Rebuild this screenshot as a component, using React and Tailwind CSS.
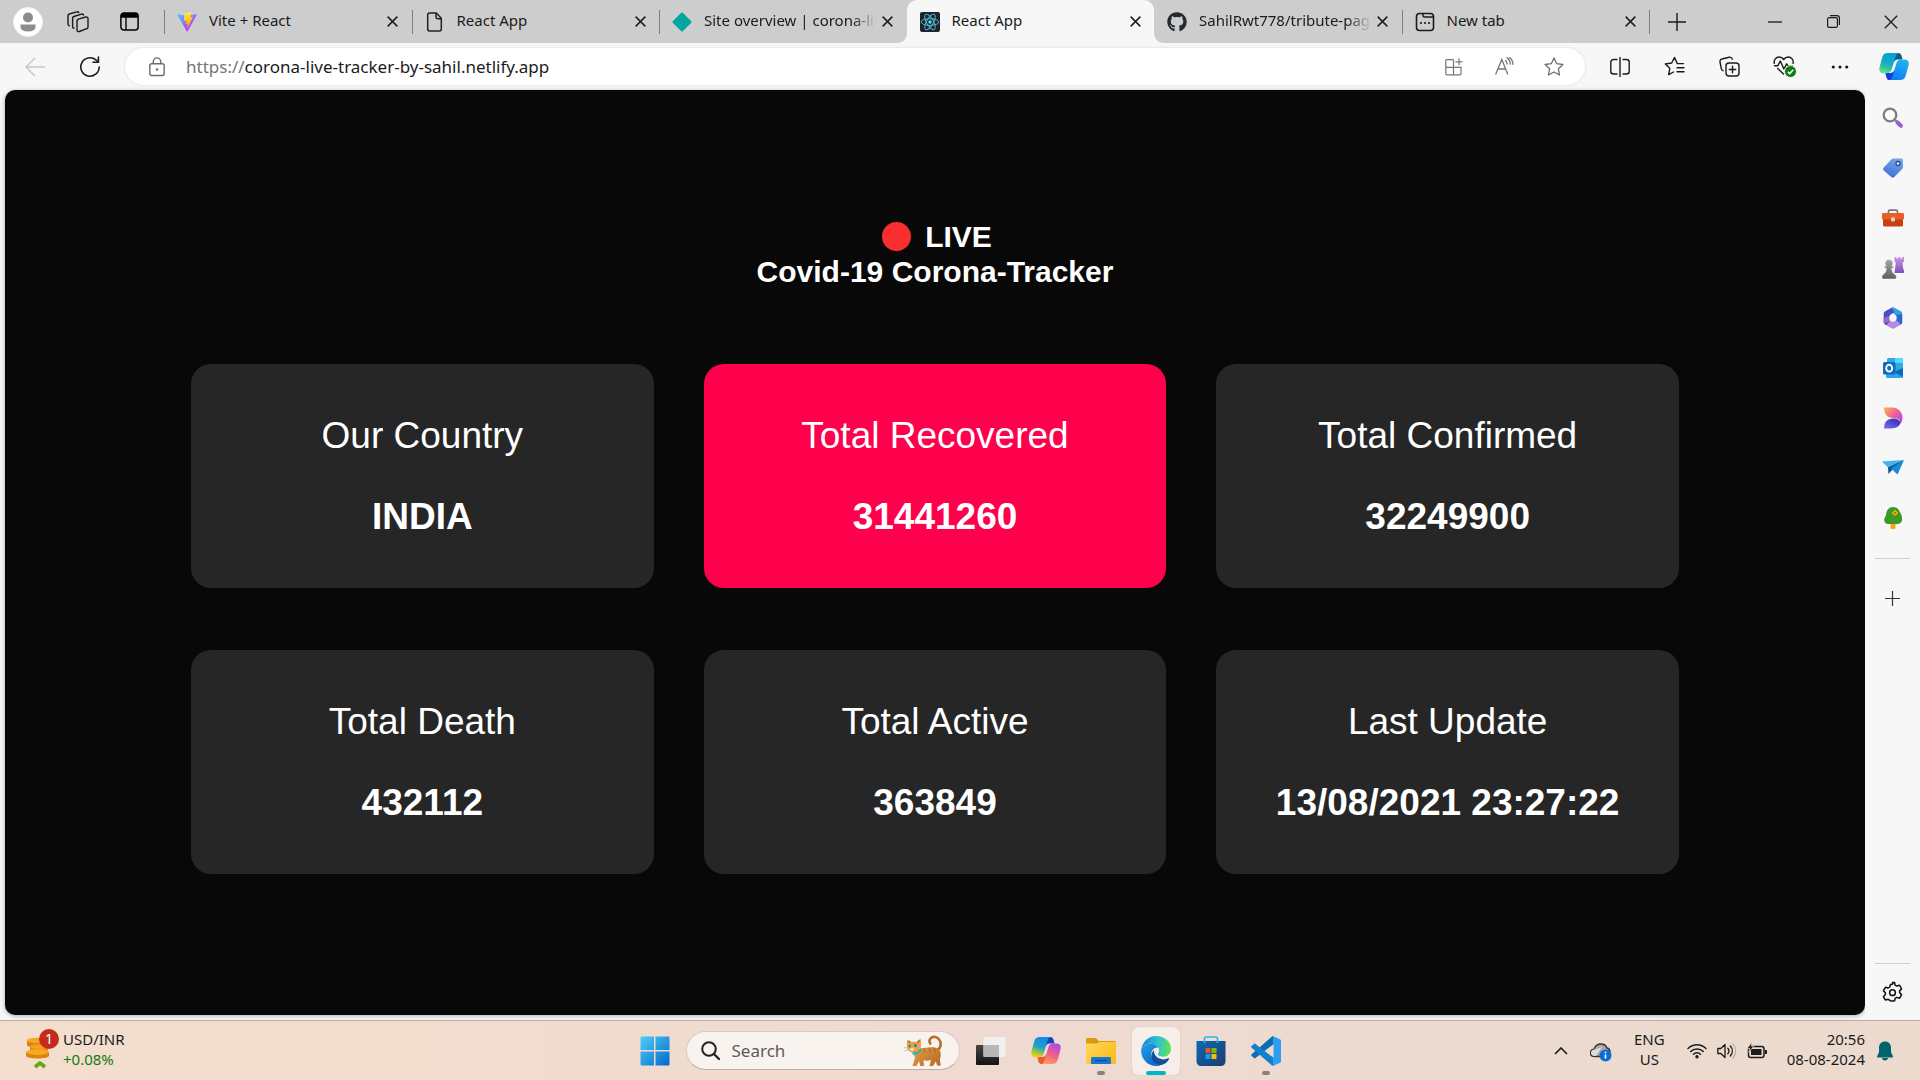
import React from "react";
import { FaGithub } from "react-icons/fa";

/* ---------- tab strip icons ---------- */

const Svg = ({ w, h = w, box, className = "", children, label }) => (
  <svg
    width={w}
    height={h}
    viewBox={box || `0 0 ${w} ${h}`}
    fill="none"
    className={"shrink-0 " + className}
    aria-hidden={label ? undefined : true}
    aria-label={label}
  >
    {children}
  </svg>
);

const Avatar = () => (
  <Svg w={30}>
    <circle cx="15" cy="15" r="14.5" fill="#fff" stroke="#f0f0f0" />
    <circle cx="15" cy="10.5" r="5" fill="#8c8c8c" />
    <path d="M7.5 17.5h15v2.3c0 3-3 4.7-7.5 4.7s-7.5-1.7-7.5-4.7z" fill="#8c8c8c" />
  </Svg>
);

const Workspaces = () => (
  <Svg w={22}>
    <g stroke="#1b1b1b" strokeWidth="1.4" strokeLinejoin="round" strokeLinecap="round">
      <path d="M11.300 8.200 18.800 6c1.200-.3 2.200.4 2.200 1.600v8.300c0 .9-.5 1.600-1.300 1.800L12.200 20.500c-1.200.4-2.200-.3-2.200-1.500V10c0-.9.500-1.600 1.300-1.800z" />
      <path d="M6.800 17.300c-.8-.2-1.200-.8-1.200-1.600V7.300c0-.9.500-1.600 1.300-1.800l7.500-2.300c1-.3 1.800.1 2.100.9" />
      <path d="M2.300 14.800c-.8-.2-1.300-.8-1.300-1.700V4.800C1 3.900 1.500 3.200 2.300 3L9.700.9c1-.3 1.700 0 2.100.7" />
    </g>
  </Svg>
);

const TabActions = () => (
  <Svg w={19}>
    <rect x=".9" y=".9" width="17.2" height="17.2" rx="3" stroke="#000" strokeWidth="1.5" />
    <path d="M.9 5.800V3.500A2.600 2.600 0 0 1 3.500.9h12a2.600 2.600 0 0 1 2.600 2.600v2.300z" fill="#000" />
    <path d="M6 5.500v12.400" stroke="#000" strokeWidth="1.4" />
  </Svg>
);

const ViteIcon = () => (
  <Svg w={20} box="0 0 32 32">
    <defs>
      <linearGradient id="va" x1="0" y1="3" x2="19" y2="28" gradientUnits="userSpaceOnUse">
        <stop stopColor="#41d1ff" />
        <stop offset="1" stopColor="#bd34fe" />
      </linearGradient>
      <linearGradient id="vb" x1="15" y1="2" x2="18" y2="24" gradientUnits="userSpaceOnUse">
        <stop stopColor="#ffea83" />
        <stop offset=".1" stopColor="#ffdd35" />
        <stop offset="1" stopColor="#ffa800" />
      </linearGradient>
    </defs>
    <path d="M31.500 4.700 16.900 30.900c-.3.500-1.100.5-1.400 0L.6 4.700c-.3-.6.200-1.300.9-1.200l14.600 2.600h.3l14.300-2.600c.7-.1 1.200.6.8 1.200z" fill="url(#va)" />
    <path d="m22.800.2-10.800 2.100a.4.400 0 0 0-.3.400L11 14c0 .3.200.5.500.4l3-.7c.3 0 .5.200.5.500l-.9 4.400c-.1.300.2.600.5.500l1.900-.6c.3-.1.500.2.500.5l-1.400 6.900c-.1.400.5.700.7.300l.2-.2 8.800-17.600c.2-.3-.1-.6-.4-.6l-3.100.6c-.3.100-.5-.2-.5-.5l2-7c.1-.3-.2-.6-.5-.6z" fill="url(#vb)" />
  </Svg>
);

const FileIcon = () => (
  <Svg w={20}>
    <path d="M4.500 1h6.800l5 5.300v10.800c0 1.100-.7 1.900-1.800 1.900h-10c-1.100 0-1.800-.8-1.800-1.900V2.900C2.700 1.800 3.400 1 4.500 1z" stroke="#222" strokeWidth="1.5" strokeLinejoin="round" />
    <path d="M11 1.300v4c0 .9.500 1.400 1.400 1.400h3.800" stroke="#222" strokeWidth="1.5" />
  </Svg>
);

const NetlifyIcon = () => (
  <Svg w={20}>
    <path d="M9 .9a1.400 1.400 0 0 1 2 0l8 8.100a1.400 1.400 0 0 1 0 2l-8 8.100a1.400 1.400 0 0 1-2 0L1 11a1.400 1.400 0 0 1 0-2z" fill="#00a6a0" />
  </Svg>
);

const ReactIcon = () => (
  <Svg w={20}>
    <rect width="20" height="20" rx="2" fill="#20232a" />
    <g stroke="#4fc3e0" strokeWidth=".9">
      <ellipse cx="10" cy="10" rx="8.8" ry="3.4" />
      <ellipse cx="10" cy="10" rx="8.8" ry="3.4" transform="rotate(60 10 10)" />
      <ellipse cx="10" cy="10" rx="8.8" ry="3.4" transform="rotate(120 10 10)" />
    </g>
    <circle cx="10" cy="10" r="1.7" fill="#61dafb" />
  </Svg>
);

const NewTabIcon = () => (
  <Svg w={20}>
    <rect x="1.5" y="1.5" width="17" height="17" rx="3" stroke="#1b1b1b" strokeWidth="1.6" />
    <path d="M8 1.500v2.200c0 .9.500 1.400 1.400 1.400h9" stroke="#1b1b1b" strokeWidth="1.5" />
    <circle cx="6" cy="11" r="1.1" fill="#1b1b1b" />
    <circle cx="10" cy="11" r="1.1" fill="#1b1b1b" />
    <circle cx="14" cy="11" r="1.1" fill="#1b1b1b" />
  </Svg>
);

const Cross = ({ size = 11, width = 1.6 }) => (
  <Svg w={size} box="0 0 12 12">
    <path d="m.7.7 10.600 10.600M11.300.7.7 11.300" stroke="#1b1b1b" strokeWidth={width} />
  </Svg>
);

const tabs = [
  { title: "Vite + React", icon: <ViteIcon /> },
  { title: "React App", icon: <FileIcon /> },
  { title: "Site overview | corona-liv", icon: <NetlifyIcon />, long: true },
  { title: "React App", icon: <ReactIcon />, active: true },
  { title: "SahilRwt778/tribute-page", icon: <FaGithub size={20} color="#24292f" className="shrink-0" />, long: true },
  { title: "New tab", icon: <NewTabIcon /> },
];

const Corner = ({ side }) => (
  <svg
    width="10"
    height="10"
    viewBox="0 0 10 10"
    aria-hidden="true"
    className={side === "left" ? "absolute bottom-0 -left-2.5" : "absolute bottom-0 -right-2.5 -scale-x-100"}
  >
    <path d="M10 0v10H0C6 10 10 6 10 0z" fill="#f7f7f7" />
  </svg>
);

function Tab({ tab, divider }) {
  return (
    <div
      className={
        "relative flex h-full min-w-0 flex-1 items-center pr-[7px] pl-[13px] " +
        (tab.active ? "rounded-t-[10px] bg-[#f7f7f7]" : "")
      }
    >
      {divider && <span className="absolute top-2.5 left-0 h-6 w-px bg-[#7f7f7f]" />}
      {tab.active && <Corner side="left" />}
      {tab.active && <Corner side="right" />}
      <button
        role="tab"
        aria-selected={!!tab.active}
        className="flex min-w-0 flex-1 items-center gap-3 text-left text-[15px] leading-5 text-[#1b1b1b]"
      >
        {tab.icon}
        <span
          className={
            "min-w-0 flex-1 overflow-hidden pb-[3px] whitespace-nowrap " +
            (tab.long ? "[mask-image:linear-gradient(to_right,black_calc(100%-24px),transparent)]" : "")
          }
        >
          {tab.title}
        </span>
      </button>
      <button aria-label={`Close ${tab.title}`} className="flex size-6 shrink-0 items-center justify-center">
        <Cross />
      </button>
    </div>
  );
}

function TabStrip() {
  return (
    <header className="flex h-[43px] items-center bg-[#cdcdcd]">
      <div className="flex w-[164px] shrink-0 items-center">
        <button aria-label="Profile" className="ml-[13px]">
          <Avatar />
        </button>
        <button aria-label="Workspaces" className="ml-6">
          <Workspaces />
        </button>
        <button aria-label="Tab actions menu" className="ml-[31px]">
          <TabActions />
        </button>
      </div>
      <div role="tablist" className="flex h-full min-w-0 flex-1">
        {tabs.map((t, i) => (
          <Tab key={i} tab={t} divider={i !== 3 && i !== 4} />
        ))}
      </div>
      <div className="flex h-full w-[271px] shrink-0 items-center justify-between">
        <span className="h-6 w-px bg-[#7f7f7f]" />
        <button aria-label="New tab" className="mr-auto ml-[18px]">
          <Svg w={18}>
            <path d="M9 0v18M0 9h18" stroke="#1b1b1b" strokeWidth="1.4" />
          </Svg>
        </button>
        <button aria-label="Minimize" className="flex h-full w-[58px] items-center justify-center">
          <Svg w={14}>
            <path d="M0 7h14" stroke="#1b1b1b" strokeWidth="1.3" />
          </Svg>
        </button>
        <button aria-label="Restore" className="flex h-full w-[58px] items-center justify-center">
          <Svg w={13}>
            <rect x=".6" y="2.6" width="9.8" height="9.8" rx="1.5" stroke="#1b1b1b" strokeWidth="1.2" />
            <path d="M3 .6h7c1.500 0 2.400.9 2.400 2.400v7" stroke="#1b1b1b" strokeWidth="1.2" />
          </Svg>
        </button>
        <button aria-label="Close window" className="flex h-full w-[58px] items-center justify-center">
          <Cross size={14} width={1.1} />
        </button>
      </div>
    </header>
  );
}

/* ---------- toolbar ---------- */

const CopilotMark = ({ size, dark }) => {
  const id = dark ? "ca" : "cb";
  return (
    <Svg w={size} h={Math.round(size * 0.9)} box="0 0 32 29">
      <defs>
        <linearGradient id={id + 1} x1="10" y1="0" x2="4" y2="20" gradientUnits="userSpaceOnUse">
          <stop stopColor={dark ? "#0a9fd8" : "#128ce8"} />
          <stop offset=".5" stopColor={dark ? "#12acc8" : "#1ea0c8"} />
          <stop offset=".75" stopColor={dark ? "#2fc0a0" : "#7cc35a"} />
          <stop offset="1" stopColor={dark ? "#5fdf90" : "#f6c916"} />
        </linearGradient>
        <linearGradient id={id + 2} x1="27" y1="7" x2="19" y2="29" gradientUnits="userSpaceOnUse">
          <stop stopColor={dark ? "#1fb4ee" : "#a84be8"} />
          <stop offset=".5" stopColor={dark ? "#189af8" : "#ee5a93"} />
          <stop offset="1" stopColor={dark ? "#147bf0" : "#fc9c58"} />
        </linearGradient>
      </defs>
      <path d="M17 0h3.500c2 0 3 1 3.500 2.800L25.200 7H20c-2.500 0-3.800 1.500-4.500 4z" fill={dark ? "#0a5a86" : "#1a44c8"} />
      <path d="M15 29h-3.600c-2 0-3-1-3.500-2.800L6.600 21.500H12c2.500 0 3.800-1.500 4.500-4z" fill={dark ? "#1040d8" : "#f0592e"} />
      <path d="M9.500 0H21c-2 .3-2.800 2-3.400 4l-4 13.500C12.700 20.500 11 21.700 8 21.700H4.500C1 21.700-.5 19 .4 15.500l3-11C4.300 1.400 6.200 0 9.500 0z" fill={`url(#${id}1)`} />
      <path d="M22.500 29H11c2-.3 2.800-2 3.400-4l4-13.500C19.300 8.200 21 7 24 7h3.500c3.500 0 5 2.700 4.100 6.200l-3 11.300c-.9 3.100-2.800 4.500-6.100 4.500z" fill={`url(#${id}2)`} />
    </Svg>
  );
};

const inBarIcons = [
  {
    label: "Apps",
    icon: (
      <Svg w={18}>
        <g stroke="#767676" strokeWidth="1.2">
          <path d="M8.500 1.600H1.900c-.7 0-1.100.4-1.100 1.100v13c0 .7.400 1.100 1.100 1.100h13c.7 0 1.100-.4 1.100-1.100V9.300H.8M8.500 1.600v15.200" />
          <path d="M14 .3v7M10.500 3.800h7" />
        </g>
      </Svg>
    ),
  },
  {
    label: "Read aloud",
    icon: (
      <Svg w={19}>
        <g stroke="#767676" strokeWidth="1.3" strokeLinecap="round">
          <path d="m.8 17 6-14.500L12.600 17M2.900 12h7.700M10.500 3.500c1 .8 1.600 2 1.600 3.500M12 .9c2.200 1.500 3.300 3.500 3.300 6.200M14.500.3c2.200 1.800 3.400 4.200 3.400 7" />
        </g>
      </Svg>
    ),
  },
  {
    label: "Add to favorites",
    icon: (
      <Svg w={20}>
        <path d="m10 1 2.700 5.700 6.200.8-4.500 4.300 1.100 6.200L10 15l-5.500 3 1.100-6.200L1.100 7.500l6.200-.8z" stroke="#6e6e6e" strokeWidth="1.3" strokeLinejoin="round" />
      </Svg>
    ),
  },
];

const barIcons = [
  {
    label: "Split screen",
    icon: (
      <Svg w={20}>
        <path d="M10 0v20M7.500 2.500h-4C2 2.500.8 3.500.8 5v9.500c0 1.500 1.200 2.500 2.700 2.500h4M12.500 2.500h4c1.500 0 2.700 1 2.700 2.500v9.500c0 1.500-1.200 2.500-2.700 2.500h-4" stroke="#1b1b1b" strokeWidth="1.4" />
      </Svg>
    ),
  },
  {
    label: "Favorites",
    icon: (
      <Svg w={21}>
        <g stroke="#1b1b1b" strokeWidth="1.4" strokeLinejoin="round" strokeLinecap="round">
          <path d="M19.500 7.600h-6.200L10.500 1.500 7.700 7 1.300 8l4.500 4.300-1.100 6.300 4.800-2.600" />
          <path d="M13 11.700h7M13 15.700h7" />
        </g>
      </Svg>
    ),
  },
  {
    label: "Collections",
    icon: (
      <Svg w={21}>
        <g stroke="#1b1b1b" strokeWidth="1.4" strokeLinecap="round">
          <rect x="7" y="7" width="13" height="13" rx="3" />
          <path d="M13.500 10.300v6.400M10.300 13.500h6.400M4 14.700c-.9-.3-1.500-1-1.700-2L1 6c-.3-1.500.5-2.700 2-3l7.200-1.800c1.500-.3 2.700.4 3 2" />
        </g>
      </Svg>
    ),
  },
  {
    label: "Browser essentials",
    icon: (
      <Svg w={24}>
        <g stroke="#1b1b1b" strokeWidth="1.4" strokeLinejoin="round" strokeLinecap="round">
          <path d="M1.300 8.300C.6 4.800 3 2 6.200 2c1.900 0 3.400 1 4.500 2.500C11.800 3 13.300 2 15.200 2c3.200 0 5.600 2.800 4.900 6.300" />
          <path d="M1.500 10.800h3.200L7.300 6l3.600 8 2.800-5.200 1.300 2h4.500" />
          <path d="m4.700 13.500 5.800 5.500" />
        </g>
        <circle cx="17.5" cy="16.5" r="6" fill="#107c10" stroke="#f7f7f7" strokeWidth="1" />
        <path d="m14.800 16.700 1.900 1.900 3.600-3.800" stroke="#fff" strokeWidth="1.5" />
      </Svg>
    ),
  },
  {
    label: "Settings and more",
    icon: (
      <Svg w={18}>
        <circle cx="2.3" cy="9" r="1.6" fill="#1b1b1b" />
        <circle cx="9" cy="9" r="1.6" fill="#1b1b1b" />
        <circle cx="15.7" cy="9" r="1.6" fill="#1b1b1b" />
      </Svg>
    ),
  },
];

function Toolbar() {
  return (
    <div className="flex h-[47px] items-center bg-[#f7f7f7]">
      <button aria-label="Back" disabled className="ml-[25px]">
        <Svg w={20}>
          <path d="M20 10H1M10 1l-9 9 9 9" stroke="#c6c6c6" strokeWidth="1.4" />
        </Svg>
      </button>
      <button aria-label="Refresh" className="ml-[34px]">
        <Svg w={22}>
          <path d="M20.200 11a9.200 9.200 0 1 1-3.300-7.100L19.200 6" stroke="#1b1b1b" strokeWidth="1.6" strokeLinecap="round" />
          <path d="M19.400 1v5.300H14" stroke="#1b1b1b" strokeWidth="1.6" strokeLinecap="round" />
        </Svg>
      </button>
      <div className="mr-[7px] ml-6 flex h-[37px] min-w-0 flex-1 items-center rounded-full bg-white pr-1.5 pl-6 shadow-[0_0_3px_rgba(0,0,0,0.12)]">
        <button aria-label="View site information">
          <Svg w={16} h={20}>
            <rect x=".8" y="6.7" width="14.4" height="11.8" rx="1.8" stroke="#6e6e6e" strokeWidth="1.4" />
            <path d="M4.300 6.500V4.600a3.700 3.700 0 0 1 7.400 0v1.900" stroke="#6e6e6e" strokeWidth="1.4" />
            <circle cx="8" cy="12.5" r="1.2" fill="#6e6e6e" />
          </Svg>
        </button>
        <label htmlFor="address" className="ml-[21px] text-[17px] leading-6 text-[#767676]">
          https://
        </label>
        <input
          id="address"
          aria-label="Address"
          defaultValue="corona-live-tracker-by-sahil.netlify.app"
          className="min-w-0 flex-1 bg-transparent text-[17px] leading-6 text-[#1b1b1b] outline-none"
        />
        {inBarIcons.map((b) => (
          <button key={b.label} aria-label={b.label} className="flex w-[50px] shrink-0 items-center justify-center">
            {b.icon}
          </button>
        ))}
      </div>
      {barIcons.map((b) => (
        <button key={b.label} aria-label={b.label} className="flex w-[55px] shrink-0 items-center justify-center">
          {b.icon}
        </button>
      ))}
      <button aria-label="Copilot" className="flex w-[53px] shrink-0 items-center justify-center">
        <CopilotMark size={30} dark />
      </button>
    </div>
  );
}

/* ---------- sidebar ---------- */

const sideIcons = [
  {
    label: "Search",
    icon: (
      <Svg w={22}>
        <circle cx="8" cy="8" r="6.3" stroke="#7d7d7d" strokeWidth="2.3" fill="#fafafa" />
        <path d="m12.800 12.800 2.500 2.500" stroke="#8c7aa0" strokeWidth="2" />
        <path d="m15.500 15.500 3.400 3.200" stroke="#9264cf" strokeWidth="4.2" strokeLinecap="round" />
      </Svg>
    ),
  },
  {
    label: "Shopping",
    icon: (
      <Svg w={22}>
        <defs>
          <linearGradient id="tag" x1="14" y1="1" x2="8" y2="21" gradientUnits="userSpaceOnUse">
            <stop stopColor="#6ea8f0" />
            <stop offset="1" stopColor="#3f6fd0" />
          </linearGradient>
        </defs>
        <path d="M11.500 1.500h7.800c1 0 1.700.7 1.700 1.700V10c0 .8-.3 1.500-.8 2l-8 8c-.9.900-2 .9-2.900 0l-7.500-6.500c-1-.9-1-2 0-3l7.500-8c.6-.6 1.300-1 2.200-1z" fill="url(#tag)" />
        <circle cx="16" cy="6.5" r="2" fill="#fff" stroke="#27457f" strokeWidth="1.3" />
      </Svg>
    ),
  },
  {
    label: "Tools",
    icon: (
      <Svg w={22}>
        <path d="M6.500 7V4.600c0-.9.600-1.400 1.500-1.400h6c.9 0 1.500.5 1.500 1.400V7" stroke="#777" strokeWidth="1.7" />
        <rect x="1" y="11" width="20" height="8.5" rx="1.5" fill="#c9400f" />
        <rect x="0" y="6" width="22" height="6.5" rx="1.3" fill="#ea5d25" />
        <rect x="9" y="10.2" width="4" height="4.2" rx="1.5" fill="#d6d6d6" />
      </Svg>
    ),
  },
  {
    label: "Games",
    icon: (
      <Svg w={22}>
        <defs>
          <linearGradient id="rook" x1="17" y1="0" x2="17" y2="17" gradientUnits="userSpaceOnUse">
            <stop stopColor="#c697ec" />
            <stop offset="1" stopColor="#7c4bb8" />
          </linearGradient>
          <linearGradient id="pawn" x1="7" y1="3" x2="7" y2="22" gradientUnits="userSpaceOnUse">
            <stop stopColor="#a2a2a2" />
            <stop offset="1" stopColor="#5f5f5f" />
          </linearGradient>
        </defs>
        <path d="M12.500 0h2v1.500h1.700V0h2.100v1.500H20V0h2v4.500l-1.500 1.300.7 6.200 1 1.200V16H12.500l1.300-10.200-1.300-1.300z" fill="url(#rook)" />
        <path d="M7 2.500a3.900 3.900 0 0 1 2.800 6.700h.9c.7 0 1 .4 1 1s-.3 1-1 1h-1c.2 2.600.8 4.300 2.300 5.500l1.700 1.300c.4.300.6.700.6 1.200v1.300c0 .8-.6 1.500-1.500 1.500H1.200C.5 22 0 21.300 0 20.500v-1.300c0-.5.200-.9.600-1.200l1.500-1.300c1.400-1.200 2-2.900 2.200-5.500h-1c-.7 0-1-.4-1-1s.3-1 1-1h.9A3.900 3.900 0 0 1 7 2.500z" fill="url(#pawn)" stroke="#f7f7f7" strokeWidth=".5" />
      </Svg>
    ),
  },
  {
    label: "Microsoft 365",
    icon: (
      <Svg w={22}>
        <path d="M9.500.7c1-.5 2-.5 3 0l6.300 3.600c1 .6 1.500 1.500 1.500 2.600L14 11 11.500 6 5 8z" fill="#35a0e8" />
        <path d="M20.300 6.900V15c0 1.100-.5 2-1.500 2.600l-1.300.8L11 15l3-4-.5-3z" fill="#2d66cf" />
        <path d="M18.800 17.600 12.500 21.300c-1 .5-2 .5-3 0L3.200 17.600c-.6-.4-1-.9-1.200-1.400L8 12l3 3 4-1.500z" fill="#b58be6" />
        <path d="M9.500.7 3.200 4.300C2.200 4.900 1.700 5.800 1.700 6.900V15c0 1 .5 2 1.500 2.600.5.300 1 .4 1.500.3L8 14V8l4.500-3z" fill="#4a4fc0" />
        <path d="M2 16.300 1.700 15V11L8 9v5.500z" fill="#a263cf" />
        <circle cx="11" cy="11" r="3.7" fill="#f7f7f7" />
      </Svg>
    ),
  },
  {
    label: "Outlook",
    icon: (
      <Svg w={22}>
        <rect x="5" y="1" width="16" height="20" rx="1.5" fill="#32a9e7" />
        <path d="M13 1h6.500c.9 0 1.500.6 1.500 1.500V6h-8z" fill="#50d9ff" />
        <path d="m4 11 17 0v8.500c0 .9-.6 1.500-1.500 1.500h-14c-.9 0-1.500-.6-1.500-1.500z" fill="#28a8ea" />
        <path d="M21 11v9l-9-5z" fill="#0f67b8" />
        <rect x="1" y="5" width="12.5" height="12.5" rx="1.5" fill="#0f6cbd" />
        <ellipse cx="7.2" cy="11.2" rx="3" ry="3.4" stroke="#fff" strokeWidth="1.9" />
      </Svg>
    ),
  },
  {
    label: "Designer",
    icon: (
      <Svg w={22}>
        <defs>
          <linearGradient id="d1" x1="3" y1="1" x2="20" y2="15" gradientUnits="userSpaceOnUse">
            <stop stopColor="#ffb04a" />
            <stop offset=".5" stopColor="#f0609a" />
            <stop offset="1" stopColor="#b244f0" />
          </linearGradient>
          <linearGradient id="d2" x1="10" y1="12" x2="4" y2="22" gradientUnits="userSpaceOnUse">
            <stop stopColor="#3d3bb8" />
            <stop offset="1" stopColor="#7d6cf5" />
          </linearGradient>
        </defs>
        <path d="M2 .5h8c6 0 10.500 4.500 10.500 10.300 0 5-3.500 8.500-7.500 10L18 14c-1-2.500-4-3-7-3C5.500 11 2 7 2 1z" fill="url(#d1)" />
        <path d="M2 21.500C2 15 5.500 11.500 11.500 11.500c4 0 6.500 1.600 6.500 4.300 0 3.500-4.500 5.700-9 5.700z" fill="url(#d2)" />
      </Svg>
    ),
  },
  {
    label: "Drop",
    icon: (
      <Svg w={22}>
        <path d="M0 4.500 22 3 6.500 11z" fill="#3fb4f2" />
        <path d="M22 3 6 10.500l.5 6.500 3.500-4z" fill="#0f548c" />
        <path d="M22 3 9 11.500l6.500 6z" fill="#1e88d8" />
      </Svg>
    ),
  },
  {
    label: "Tree",
    icon: (
      <Svg w={22}>
        <rect x="8.5" y="15" width="5" height="7" rx="1" fill="#f2a81d" />
        <path d="M11 0c3.500 0 5.800 2 6.800 5 1.500 2 2.300 4.500 2.300 7 0 3-2 5-5 5H6.500C4 17 2.300 15.500 2.300 13c0-2 .8-3.500 1.700-4.500C4 4 6.500 0 11 0z" fill="#3c9a24" />
        <path d="m13 2.800 3.200 3.100L13 9 9.800 5.900z" fill="#f5b80f" />
        <circle cx="13" cy="5.9" r="1.2" fill="#e05a10" />
      </Svg>
    ),
  },
];

function Sidebar() {
  return (
    <aside aria-label="Sidebar" className="flex w-[55px] shrink-0 flex-col items-center bg-[#f7f7f7] pt-[3px]">
      {sideIcons.map((s) => (
        <button key={s.label} aria-label={s.label} className="flex h-[50px] w-full items-center justify-center">
          {s.icon}
        </button>
      ))}
      <hr className="mt-[15px] mb-3.5 w-[35px] border-[#cfcfcf]" />
      <button aria-label="Customize" className="flex h-[50px] w-full items-center justify-center">
        <Svg w={15}>
          <path d="M7.500 0v15M0 7.500h15" stroke="#333" strokeWidth="1.2" />
        </Svg>
      </button>
      <hr className="mt-auto w-[35px] border-[#cfcfcf]" />
      <button aria-label="Settings" className="flex h-14 w-full items-center justify-center">
        <Svg w={23} box="0 0 24 24">
          <path d="M12 1.500c.8 0 1.500.1 2.200.2l.6 2.700c.6.200 1.200.5 1.700.9l2.700-.8c1 1.100 1.800 2.400 2.200 3.800l-2 2c.1.600.1 1.200 0 1.800l2 2c-.4 1.400-1.200 2.700-2.200 3.800l-2.700-.8c-.5.400-1.100.7-1.700.9l-.6 2.700c-1.400.3-3 .3-4.400 0L9.200 20c-.6-.2-1.200-.5-1.700-.9l-2.700.8c-1-1.100-1.800-2.400-2.200-3.800l2-2c-.1-.6-.1-1.200 0-1.800l-2-2c.4-1.400 1.200-2.700 2.200-3.800l2.700.8c.5-.4 1.100-.7 1.700-.9l.6-2.700c.7-.1 1.400-.2 2.200-.2z" stroke="#111" strokeWidth="1.6" strokeLinejoin="round" />
          <circle cx="12" cy="12.2" r="3" stroke="#111" strokeWidth="1.6" />
        </Svg>
      </button>
    </aside>
  );
}

/* ---------- tracker page ---------- */

const cards = [
  { title: "Our Country", value: "INDIA" },
  { title: "Total Recovered", value: "31441260", highlight: true },
  { title: "Total Confirmed", value: "32249900" },
  { title: "Total Death", value: "432112" },
  { title: "Total Active", value: "363849" },
  { title: "Last Update", value: "13/08/2021 23:27:22" },
];

function Tracker() {
  return (
    <main className="mb-[5px] ml-[5px] min-w-0 flex-1 rounded-[10px] bg-[#080808] pt-[129px] font-['Liberation_Sans',Arial,sans-serif] text-white shadow-[0_1px_4px_rgba(0,0,0,0.3)]">
      <h1 className="flex items-center justify-center gap-3.5 pl-1 text-[30px] leading-[35px] font-bold">
        <span className="size-[29px] rounded-full bg-[#f92f2f]" />
        LIVE
      </h1>
      <h2 className="text-center text-[30px] leading-[35px] font-bold">Covid-19 Corona-Tracker</h2>
      <ul className="mx-auto mt-[75px] grid w-4/5 grid-cols-3 gap-x-[50px] gap-y-[62px]">
        {cards.map((c) => (
          <li
            key={c.title}
            className={
              "flex h-56 flex-col items-center justify-center gap-[38px] rounded-[20px] text-center " +
              (c.highlight ? "bg-[#ff004d]" : "bg-[#262626]")
            }
          >
            <p className="text-[37px] leading-[43px]">{c.title}</p>
            <p className="text-[37px] leading-[43px] font-bold">{c.value}</p>
          </li>
        ))}
      </ul>
    </main>
  );
}

/* ---------- taskbar ---------- */

const Cat = () => (
  <Svg w={39} h={32}>
    <defs>
      <linearGradient id="cat" x1="8" y1="4" x2="34" y2="31" gradientUnits="userSpaceOnUse">
        <stop stopColor="#eda94f" />
        <stop offset="1" stopColor="#b96c22" />
      </linearGradient>
    </defs>
    <path d="M33 16c3.500-3 4.500-7 2.800-10.500C34 2 29 .500 26.500 3.500 25 5.500 25.300 7.300 26.300 8.500" stroke="#b8702a" strokeWidth="2.6" strokeLinecap="round" />
    <path d="M13 13c6 1 12-1.500 18-.5 4.500.8 6 4 5.800 7.500 0 2.500-1.300 4-.8 6l.8 4.500h-3.600l-1.400-4-2.800 4.500h-3.500l1.500-6c-3 1-5 1-7.500.3l.5 5.700h-3.700l-1.300-5-2.500 5H8.500l2.500-8-1.500-6z" fill="url(#cat)" />
    <path d="M3.500 4.500 7.500 7c1.700-.5 3.300-.5 5 0l4-3.500c.8 3.500.7 6.500.2 9-.7 3-3.700 5-6.700 5-3.500 0-6.500-2-7-5C2.600 10 2.800 7 3.500 4.500z" fill="#e8a24a" />
    <path d="m4.600 6.300 1.500 1.200M15.500 5.500l-1.800 1.900" stroke="#9b5418" strokeWidth="1.2" />
    <path d="M20 13.500l.8 3.500M25 13l1 4M30 13l1.500 4" stroke="#a65f1c" strokeWidth=".9" strokeLinecap="round" />
    <ellipse cx="5.8" cy="11" rx="1.2" ry="1.6" fill="#2a8fa8" />
    <ellipse cx="11.5" cy="10.5" rx="1.5" ry="1.7" fill="#2a8fa8" />
    <path d="M5.500 13.500h5l-2.300 2.800z" fill="#fff0da" />
    <path d="M0 12.500l4 .8M.5 16l4-1.300" stroke="#b9a58e" strokeWidth=".6" />
    <path d="M8.500 18c4 .8 7-1 8.500-4" stroke="#27b3ae" strokeWidth="1.8" />
    <circle cx="10" cy="19" r="1.3" fill="#3bc2c8" />
  </Svg>
);

const EdgeIcon = () => (
  <Svg w={30} box="0 0 32 32">
    <defs>
      <linearGradient id="e1" x1="4" y1="8" x2="32" y2="12" gradientUnits="userSpaceOnUse">
        <stop stopColor="#1b93d8" />
        <stop offset=".5" stopColor="#2ec3cf" />
        <stop offset="1" stopColor="#66e34b" />
      </linearGradient>
      <linearGradient id="e2" x1="2" y1="12" x2="18" y2="32" gradientUnits="userSpaceOnUse">
        <stop stopColor="#1a9ae3" />
        <stop offset="1" stopColor="#0f62c4" />
      </linearGradient>
    </defs>
    <path d="M.5 14C1.500 6 8 0 16 0c9 0 16 6 16 13.500 0 5-3.500 8.500-8.500 8.500-3.500 0-6-1.300-5.500-3 .3-.8 1.300-1.500 1.300-3.500C19.300 11 15 8 10.500 8 5.500 8 2 10.500.5 14z" fill="url(#e1)" />
    <path d="M.2 14.500C1.500 10.500 5.500 8 10.500 8c3.500 0 6.500 1.800 7.800 4.200C13 12 10.500 16.500 11 21c.6 6 5 10 10 10.200C19.500 31.700 17.800 32 16 32 7 32-.5 24 .2 14.500z" fill="url(#e2)" />
    <path d="M14 15c-1.500 1.500-3.300 4-3 7.500C11.500 28 16.500 32 22 31c3.800-1 6.500-3.700 7.900-6.500.3-.6-.3-1-.8-.7-3.600 1.800-8.600 1.400-11.600-.8C14.500 20.800 13.500 18 14 15z" fill="#10509f" />
  </Svg>
);

const taskApps = [
  {
    label: "Task view",
    icon: (
      <Svg w={30}>
        <defs>
          <linearGradient id="tv" x1="0" y1="8" x2="0" y2="28" gradientUnits="userSpaceOnUse">
            <stop stopColor="#484848" />
            <stop offset="1" stopColor="#151515" />
          </linearGradient>
        </defs>
        <rect y="9" width="23" height="20" rx="1" fill="url(#tv)" />
        <rect x="7.5" y="1" width="22" height="20" rx="1" fill="#f1f1f1" fillOpacity=".94" />
        <path d="M7.500 9H23v12H8.500a1 1 0 0 1-1-1z" fill="#b7b7b7" />
      </Svg>
    ),
  },
  { label: "Copilot", icon: <CopilotMark size={30} /> },
  {
    label: "File Explorer",
    running: true,
    icon: (
      <Svg w={30}>
        <defs>
          <linearGradient id="fo" x1="0" y1="4" x2="30" y2="28" gradientUnits="userSpaceOnUse">
            <stop stopColor="#ffd95e" />
            <stop offset="1" stopColor="#fdb913" />
          </linearGradient>
        </defs>
        <path d="M0 3.500C0 2.600.6 2 1.500 2h8.300l3 3H28.500c.9 0 1.500.6 1.500 1.500V9H0z" fill="#dd9a08" />
        <path d="M0 7.500h10.500L13 6h17v20.500c0 .9-.6 1.500-1.500 1.500h-27C.6 28 0 27.400 0 26.500z" fill="url(#fo)" />
        <path d="M5 28v-5.500C5 21.700 5.700 21 6.500 21h17c.8 0 1.500.7 1.500 1.500V28z" fill="#1479cf" />
        <path d="M9 24.500h12" stroke="#0a4c90" strokeWidth="1.3" />
      </Svg>
    ),
  },
  { label: "Microsoft Edge", active: true, icon: <EdgeIcon /> },
  {
    label: "Microsoft Store",
    icon: (
      <Svg w={30}>
        <defs>
          <linearGradient id="st" x1="4" y1="5" x2="26" y2="30" gradientUnits="userSpaceOnUse">
            <stop stopColor="#0d66b5" />
            <stop offset="1" stopColor="#1c3f70" />
          </linearGradient>
        </defs>
        <path d="M.5 5h29v20.500c0 2.500-2 4.500-4.500 4.500H5C2.500 30 .5 28 .5 25.500z" fill="url(#st)" />
        <path d="M8.500 7V2.500C8.500 1.500 9 1 10 1h10c1 0 1.500.5 1.500 1.500V7" stroke="#28b9ee" strokeWidth="1.7" />
        <path d="M9.500 12h5v5h-5z" fill="#f25022" />
        <path d="M15.500 12h5v5h-5z" fill="#7fba00" />
        <path d="M9.500 18h5v5h-5z" fill="#00a4ef" />
        <path d="M15.500 18h5v5h-5z" fill="#ffb900" />
      </Svg>
    ),
  },
  {
    label: "Visual Studio Code",
    running: true,
    icon: (
      <Svg w={30}>
        <path d="M22.500.3 29 3.200c.6.300 1 .9 1 1.600v20.400c0 .7-.4 1.300-1 1.600l-6.500 2.900z" fill="#2c9ff0" />
        <path d="M22.500.3v7.900L4.500 22.100c-.5.400-1 .4-1.500 0L.6 20c-.6-.5-.6-1.300 0-1.800L20.700.7c.5-.5 1.200-.6 1.800-.4z" fill="#0a6db5" />
        <path d="M22.500 29.700v-7.900L4.500 7.900c-.5-.4-1-.4-1.500 0L.6 10c-.6.500-.6 1.300 0 1.800l20.100 17.500c.5.500 1.200.6 1.800.4z" fill="#1180cf" />
      </Svg>
    ),
  },
];

function Taskbar() {
  return (
    <footer className="grid h-[60px] grid-cols-[1fr_auto_1fr] items-center border-t border-[#bcaaa2] bg-linear-to-r from-[#f4decd] via-[#eedad0] to-[#ecdacf] text-[15px] leading-5 text-[#1b1b1b]">
      <button className="flex items-center justify-self-start pb-1 pl-6 text-left">
        <Svg w={36} h={40}>
          <path d="M3 12v4c0 1.500 4 2.500 10 2.500s9-1 9-2.500v-4z" fill="#d9820c" />
          <ellipse cx="12.5" cy="11.5" rx="9.5" ry="2.7" fill="#f5a623" />
          <path d="M6 17v4c0 1.400 4 2.300 9 2.300s9-.9 9-2.300v-4z" fill="#e08a10" />
          <ellipse cx="15" cy="17.5" rx="9" ry="2.3" fill="#f7a11d" />
          <path d="M2 23v3.500C2 28.300 7 29.500 13.500 29.500S25 28.300 25 26.500V23z" fill="#dd8409" />
          <ellipse cx="13.5" cy="23" rx="11.5" ry="2.9" fill="#f9a826" />
          <path d="m11 38 5-4 5 4" stroke="#63a811" strokeWidth="3.6" strokeLinejoin="round" />
          <circle cx="25" cy="10" r="10" fill="#c42b1c" />
          <text x="25" y="15" textAnchor="middle" fontSize="14" fontFamily="Noto Sans, sans-serif" fill="#fff">
            1
          </text>
        </Svg>
        <span className="ml-[3px]">
          <span className="block">USD/INR</span>
          <span className="block text-[#107c10]">+0.08%</span>
        </span>
      </button>

      <div className="flex items-center gap-[7px]">
        <button aria-label="Start" className="flex size-12 items-center justify-center">
          <Svg w={30}>
            <defs>
              <linearGradient id="win" x1="0" y1="0" x2="30" y2="30" gradientUnits="userSpaceOnUse">
                <stop stopColor="#51d0fb" />
                <stop offset="1" stopColor="#0067c8" />
              </linearGradient>
            </defs>
            <path d="M1.500.5H14V14H.5V1.500a1 1 0 0 1 1-1zM15.500.5h13a1 1 0 0 1 1 1V14h-14zM.5 15.500H14v14H1.500a1 1 0 0 1-1-1zM15.500 15.500h14v13a1 1 0 0 1-1 1h-13z" fill="url(#win)" />
          </Svg>
        </button>
        <label className="flex h-[39px] w-[274px] items-center rounded-full border border-[#dccbc2] border-b-[#bfaea6] bg-[#f9f3ef] pr-4 pl-3.5">
          <Svg w={19}>
            <circle cx="8" cy="8" r="6.8" stroke="#222" strokeWidth="2" />
            <path d="m13 13 5 5" stroke="#222" strokeWidth="2.3" strokeLinecap="round" />
          </Svg>
          <input
            aria-label="Search"
            placeholder="Search"
            className="ml-3 min-w-0 flex-1 bg-transparent text-[17px] leading-6 outline-none placeholder:text-[#5d5a58]"
          />
          <Cat />
        </label>
        {taskApps.map((a) => (
          <button
            key={a.label}
            aria-label={a.label}
            className={
              "relative flex size-12 items-center justify-center rounded-md " +
              (a.active ? "bg-[#f7eee9] shadow-[0_0_1px_rgba(0,0,0,0.3)]" : "")
            }
          >
            {a.icon}
            {a.active && <span className="absolute bottom-0 h-1 w-5 rounded-full bg-[#00b7c3]" />}
            {a.running && <span className="absolute bottom-0 h-1 w-2 rounded-full bg-[#8a817c]" />}
          </button>
        ))}
      </div>

      <div className="flex items-center justify-self-end pr-[27px]">
        <button aria-label="Show hidden icons">
          <Svg w={14} h={8}>
            <path d="m1 7 6-6 6 6" stroke="#1b1b1b" strokeWidth="1.6" />
          </Svg>
        </button>
        <button aria-label="OneDrive" className="ml-[22px]">
          <Svg w={22}>
            <path d="M4.500 16.500C2 16.500.5 15 .5 12.800c0-2 1.500-3.500 3.500-3.700C5 6 7.500 4 11 4c3 0 5 1.500 6 4 2 .5 3 2 3 4 0 2.500-1.500 4.500-4 4.500z" fill="#a9a9a9" stroke="#333" strokeWidth="1.4" />
            <path d="M4.500 16c-2 0-3.500-1.200-3.500-3 0-2 1.500-3.500 4-3.500L12 7l-6 9z" fill="#dcdcdc" />
            <circle cx="15.5" cy="15.5" r="6" fill="#0f6cd0" />
            <path d="M15.500 14.500v4M15.500 11.700v1.600" stroke="#fff" strokeWidth="1.6" />
          </Svg>
        </button>
        <button aria-label="Input language" className="ml-[22px] pb-[3px] text-center">
          <span className="block">ENG</span>
          <span className="block">US</span>
        </button>
        <button aria-label="Network, volume and battery" className="ml-[22px] flex items-center gap-2.5">
          <Svg w={20} h={16}>
            <g stroke="#1b1b1b" strokeWidth="1.5" strokeLinecap="round">
              <path d="M1 5.500c5-5 13-5 18 0M3.700 8.500c3.500-3.500 9-3.500 12.600 0M6.500 11.300c2-2 5-2 7 0" />
            </g>
            <circle cx="10" cy="13.8" r="1.7" fill="#1b1b1b" />
          </Svg>
          <Svg w={20} h={16}>
            <path d="M.8 5.500h3L8 1.500v13l-4.200-4h-3z" stroke="#1b1b1b" strokeWidth="1.3" strokeLinejoin="round" />
            <path d="M10.800 5.300c1.400 1.600 1.400 3.800 0 5.400M13.300 3c2.700 3 2.700 7 0 10" stroke="#1b1b1b" strokeWidth="1.3" strokeLinecap="round" />
            <path d="M15.800.8c3.800 4.400 3.800 10 0 14.400" stroke="#b7aca6" strokeWidth="1.3" strokeLinecap="round" />
          </Svg>
          <Svg w={20} h={18}>
            <rect x="1.5" y="4.5" width="15.5" height="11" rx="2.3" stroke="#1b1b1b" strokeWidth="1.5" />
            <rect x="4" y="7" width="10.5" height="6" fill="#1b1b1b" />
            <path d="M18 8h1c.6 0 1 .4 1 1v2c0 .6-.4 1-1 1h-1z" fill="#1b1b1b" />
            <path d="M4.800.2.3 6.500h2.500L1.800 10.500l5-6.300H4.500z" fill="#1b1b1b" stroke="#ecdacf" strokeWidth=".7" />
          </Svg>
        </button>
        <button aria-label="Clock" className="ml-5 pb-[3px] text-right">
          <span className="block">20:56</span>
          <span className="block">08-08-2024</span>
        </button>
        <button aria-label="Notifications" className="ml-3">
          <Svg w={16} h={20}>
            <path d="M8 .5c3.600 0 6 2.600 6 6v4.500l2 4.500c.1.500-.1.900-.7.900H.7c-.6 0-.8-.4-.7-.9L2 11V6.500c0-3.400 2.400-6 6-6z" fill="#00646b" />
            <path d="M5 17h6c0 1.500-1.300 2.400-3 2.400S5 18.500 5 17z" fill="#00646b" />
          </Svg>
        </button>
      </div>
    </footer>
  );
}

export default function App() {
  return (
    <div className="flex min-h-screen flex-col bg-[#f7f7f7] font-['Noto_Sans','Open_Sans',sans-serif]">
      <TabStrip />
      <Toolbar />
      <div className="flex flex-1">
        <Tracker />
        <Sidebar />
      </div>
      <Taskbar />
    </div>
  );
}
